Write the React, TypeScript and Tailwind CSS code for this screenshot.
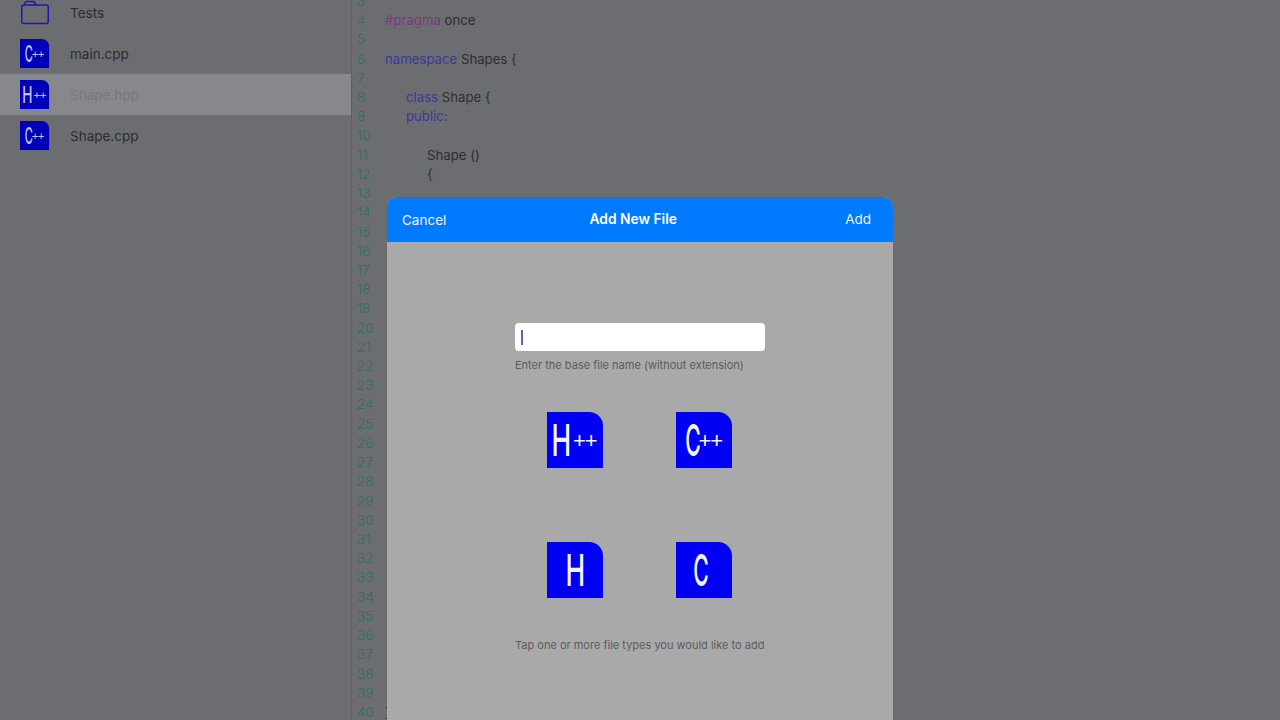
const uiFont = { fontFamily: "Inter, 'Liberation Sans', sans-serif" };

type FileIconProps = {
  letter: "H" | "C";
  plus?: boolean;
  dim?: boolean;
};

const FileIcon = ({ letter, plus, dim }: FileIconProps) => (
  <div
    className={`flex h-[56px] w-[56px] items-center justify-center rounded-tr-[14px] ${
      dim ? "bg-[#0000b8] text-[#c4c4ea]" : "bg-[#0000f2] text-[#f4f4ff]"
    }`}
  >
    {letter === "H" ? (
      <span className="-mx-[7px] w-[32px] scale-x-[0.6] text-center text-[44px] leading-none font-medium">H</span>
    ) : (
      <span className={`-mx-[8px] w-[32px] scale-x-[0.48] text-center text-[44px] leading-none font-medium ${plus ? "" : "-translate-x-[3px]"}`}>C</span>
    )}
    {plus && (
      <span className={`w-[25px] translate-y-[1px] font-['Liberation_Sans',sans-serif] text-[22px] leading-none tracking-[-1px] ${letter === "H" ? "ml-[3px]" : "-ml-[2px]"}`}>++</span>
    )}
  </div>
);

const SmallIcon = ({ letter }: { letter: "H" | "C" }) => (
  <div className="h-[29px] w-[29px]">
    <div className="origin-top-left scale-[0.52]">
      <FileIcon letter={letter} plus dim />
    </div>
  </div>
);

const FolderIcon = () => (
  <svg width="30" height="25" viewBox="0 0 30 25" fill="none" stroke="#1a1ab0" strokeWidth="1.5">
    <path d="M5 5 V3.5 Q5 1.5 7 1.5 H13 Q15 1.5 15.5 5" />
    <rect x="1.75" y="5" width="26.5" height="18.5" rx="2" />
  </svg>
);

const SideRow = ({ name, icon, active }: { name: string; icon: React.ReactNode; active?: boolean }) => (
  <div className={`flex h-[41px] items-center pl-5 ${active ? "bg-[#87888c]" : ""}`}>
    <div className="flex w-[50px] shrink-0 items-center">{icon}</div>
    <span className={`pt-[1px] text-[13.5px] ${active ? "text-[#77787c]" : "text-[#2c2c30]"}`}>{name}</span>
  </div>
);

const kw = "text-[#3b389a]";

const codeLines: Record<number, React.ReactNode> = {
  4: (
    <>
      <span className="text-[#7a3a7c]">#pragma</span> once
    </>
  ),
  6: (
    <>
      <span className={kw}>namespace</span> Shapes {"{"}
    </>
  ),
  8: (
    <span className="pl-[21px]">
      <span className={kw}>class</span> Shape {"{"}
    </span>
  ),
  9: (
    <span className="pl-[21px]">
      <span className={kw}>public:</span>
    </span>
  ),
  11: <span className="pl-[42px]">Shape ()</span>,
  12: <span className="pl-[42px]">{"{"}</span>,
  40: <span>{"}"}</span>,
};

const lineNumbers = Array.from({ length: 38 }, (_, i) => i + 3);

export default function App() {
  return (
    <div className="relative flex h-[720px] w-[1280px] overflow-hidden bg-[#6c6d71]" style={uiFont}>
      <div className="w-[351px] shrink-0 -mt-2">
        <SideRow name="Tests" icon={<FolderIcon />} />
        <SideRow name="main.cpp" icon={<SmallIcon letter="C" />} />
        <SideRow name="Shape.hpp" icon={<SmallIcon letter="H" />} active />
        <SideRow name="Shape.cpp" icon={<SmallIcon letter="C" />} />
      </div>

      <div className="-mt-[8.6px] flex-1 border-l border-[#5f6064] pl-[5px]">
        {lineNumbers.map((n) => (
          <div key={n} className="flex h-[19.22px] items-center text-[13.2px] whitespace-pre text-[#2e2e33]">
            <span className="w-[28px] shrink-0 text-[13.5px] font-light text-[#2f6e6a]">{n}</span>
            <div className="pt-[1.5px]">{codeLines[n]}</div>
          </div>
        ))}
      </div>

      <div className="absolute top-[197px] left-[387px] flex h-[530px] w-[506px] flex-col overflow-hidden rounded-t-[10px] bg-[#a9a9a9]">
        <div className="flex h-[45px] shrink-0 items-center justify-between bg-[#007aff] pr-[22px] pl-[15px] text-[13.5px] text-[#eef6ff]">
          <span className="pt-[1px]">Cancel</span>
          <span className="mr-[25px] text-[13.8px] font-semibold text-white">Add New File</span>
          <span>Add</span>
        </div>

        <div className="flex flex-1 flex-col items-center pt-[81px]">
          <div className="flex h-[28px] w-[250px] items-center rounded-[4px] bg-white pl-[6px]">
            <div className="h-[15px] w-[2px] bg-[#6060b8]" />
          </div>
          <p className="mt-[6px] w-[250px] text-[11px] leading-[16px] text-[#5c5c60]">Enter the base file name (without extension)</p>

          <div className="mt-[39px] mr-[1px] grid grid-cols-[56px_56px] gap-x-[73px] gap-y-[74px]">
            <FileIcon letter="H" plus />
            <FileIcon letter="C" plus />
            <FileIcon letter="H" />
            <FileIcon letter="C" />
          </div>

          <p className="mt-[39px] w-[250px] text-[11px] leading-[16px] text-[#5c5c60]">Tap one or more file types you would like to add</p>
        </div>
      </div>
    </div>
  );
}
